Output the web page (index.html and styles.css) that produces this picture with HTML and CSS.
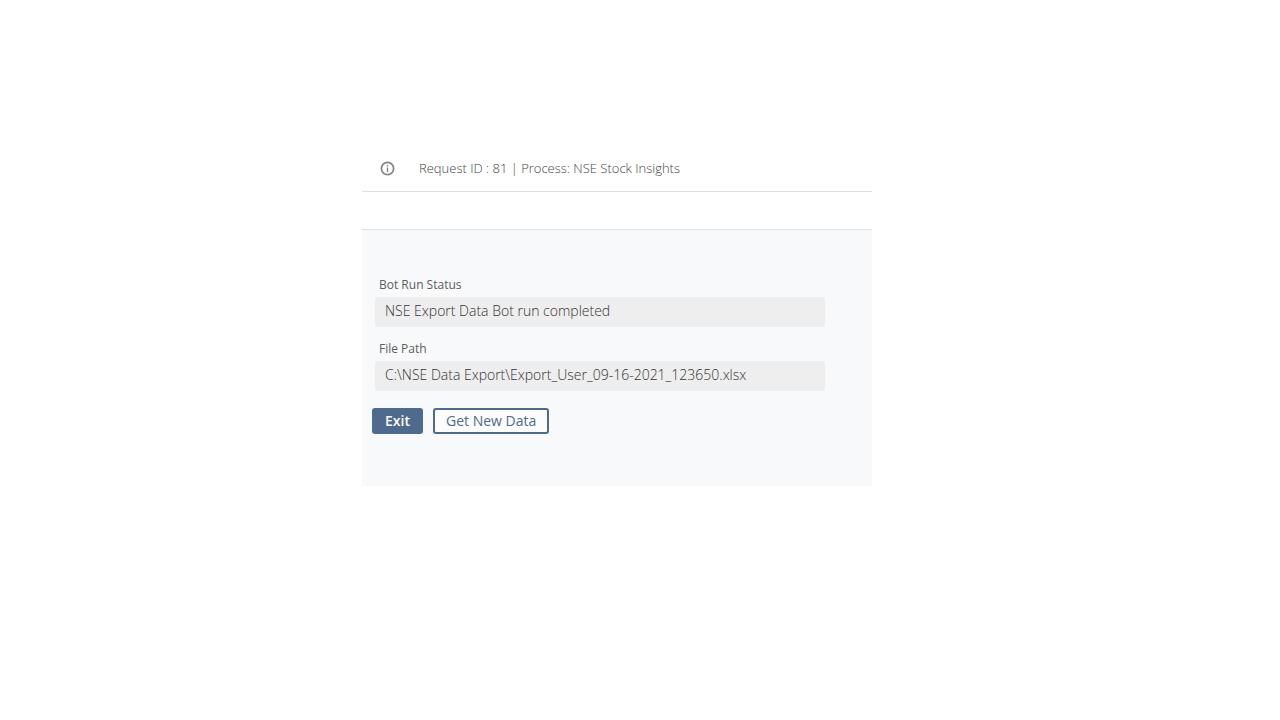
FILE: index.html
```html
<!DOCTYPE html>
<html lang="en">
<head>
    <meta charset="UTF-8">
    <meta name="viewport" content="width=device-width, initial-scale=1.0">
    <title>NSE Stock Insights</title>
    <link rel="stylesheet" href="styles.css">
</head>
<body>
    <main class="container">
        <header class="header">
            <svg class="info-icon" viewBox="0 0 14 14" aria-hidden="true">
                <circle cx="7" cy="7" r="5.7" fill="none" stroke="currentColor" stroke-width="1.6"/>
                <path d="M7 6v4.2" stroke="currentColor" stroke-width="1.3"/>
                <circle cx="7" cy="4.3" r="0.8" fill="currentColor"/>
            </svg>
            <span class="title">Request ID : 81 | Process: NSE Stock Insights</span>
        </header>
        <form class="panel">
            <div class="field">
                <label for="status">Bot Run Status</label>
                <input type="text" id="status" value="NSE Export Data Bot run completed" readonly>
            </div>
            <div class="field">
                <label for="file_path">File Path</label>
                <input type="text" id="file_path" value="C:\NSE Data Export\Export_User_09-16-2021_123650.xlsx" readonly>
            </div>
            <div class="buttons">
                <button type="button" class="btn btn-primary">Exit</button>
                <button type="button" class="btn">Get New Data</button>
            </div>
        </form>
    </main>
</body>
</html>
```
FILE: styles.css
```css
* {
    box-sizing: border-box;
}

body {
    font-family: "Open Sans", "Noto Sans", sans-serif;
    background-color: #fff;
    color: #5c5c5c;
    margin: 0;
    padding: 145px 46px 0 0;
}

.container {
    max-width: 510px;
    margin: 0 auto;
}

.header {
    display: flex;
    align-items: center;
    gap: 24px;
    height: 47px;
    padding: 0 18px;
    border-bottom: 1px solid #dfe1e6;
}

.info-icon {
    width: 15px;
    height: 15px;
    color: #858585;
}

.title {
    font-size: 13px;
    font-weight: 300;
    color: #444;
}

.panel {
    margin-top: 37px;
    padding: 47px 47px 52px 13px;
    background-color: #f8f9fb;
    border-top: 1px solid #dfe1e6;
}

.field {
    margin-bottom: 14px;
}

label {
    display: block;
    padding-left: 4px;
    font-size: 12px;
    line-height: 16px;
    margin-bottom: 4px;
}

input[type="text"] {
    display: block;
    width: 100%;
    height: 30px;
    padding: 0 10px 3px;
    font-family: inherit;
    font-size: 14px;
    font-weight: 300;
    color: #333;
    background-color: #eee;
    border: none;
    border-radius: 2px;
}

.buttons {
    display: flex;
    gap: 10px;
    margin: 17px 0 0 -3px;
}

.btn {
    height: 26px;
    padding: 0 11px;
    font-family: inherit;
    font-size: 14px;
    line-height: 20px;
    color: #4e6a8c;
    background-color: #fcfcfd;
    border: 2px solid #4e6a8c;
    border-radius: 3px;
    cursor: pointer;
}

.btn-primary {
    font-weight: 600;
    color: #fff;
    background-color: #4e6a8c;
}
```
